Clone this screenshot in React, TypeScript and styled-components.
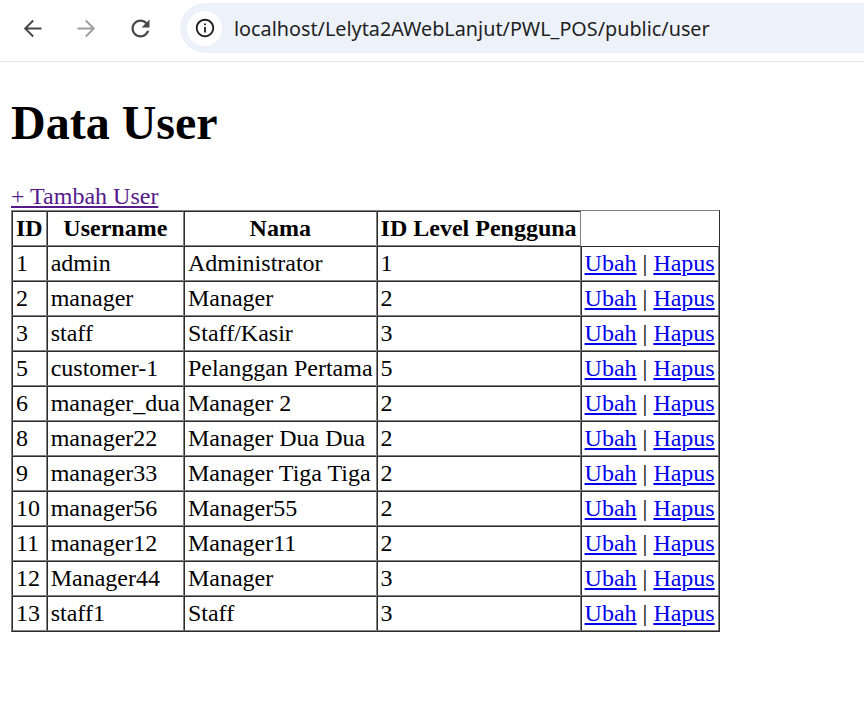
import React from "react";
import styled, { createGlobalStyle } from "styled-components";

const Global = createGlobalStyle`
  html, body { margin: 0; padding: 0; background: #ffffff; }
  body { font-family: "Liberation Serif", "Times New Roman", serif; color: #000; overflow: hidden; }
`;

const TopBar = styled.div`
  height: 62px;
  box-sizing: border-box;
  border-bottom: 1px solid #e2e2e2;
  display: flex;
  align-items: flex-start;
  padding: 3px 0 0 5px;
  background: #ffffff;
`;

const NavButton = styled.div<{ $dim?: boolean }>`
  width: 54px;
  height: 50px;
  display: flex;
  align-items: center;
  justify-content: center;
  color: ${(p) => (p.$dim ? "#9e9e9e" : "#474747")};
  flex-shrink: 0;
`;

const Omnibox = styled.div`
  flex: 1;
  margin-left: 13px;
  height: 50px;
  border-radius: 25px 0 0 25px;
  background: #edf2fa;
  display: flex;
  align-items: center;
  padding-left: 7px;
`;

const InfoBadge = styled.div`
  width: 35px;
  height: 35px;
  border-radius: 50%;
  background: #ffffff;
  display: flex;
  align-items: center;
  justify-content: center;
  color: #1f1f1f;
  flex-shrink: 0;
`;

const UrlText = styled.span`
  margin-left: 12px;
  font-family: "Noto Sans", "Liberation Sans", sans-serif;
  font-size: 19.8px;
  color: #1f1f1f;
  white-space: nowrap;
`;

const Page = styled.div`
  padding: 33px 12px 0 11px;
  font-size: 24px;
`;

const Title = styled.h1`
  font-size: 48px;
  font-weight: bold;
  margin: 0 0 32px;
  line-height: 55px;
`;

const AddLink = styled.a`
  display: block;
  color: #551a8b;
  text-decoration: underline;
  line-height: 28px;
  cursor: pointer;
`;

const Table = styled.table`
  border: 1px outset grey;
  border-spacing: 0;
  background: #ffffff;
  font-size: 24px;
  line-height: 27px;
`;

const HeadCell = styled.th`
  border: 1px inset grey;
  padding: 3px;
  font-weight: bold;
  text-align: center;
  white-space: nowrap;
`;

const Cell = styled.td`
  border: 1px inset grey;
  padding: 3px;
  white-space: nowrap;
`;

const ActionLink = styled.a`
  color: #0000ee;
  text-decoration: underline;
  cursor: pointer;
`;

type User = { id: number; username: string; nama: string; level: number };

const users: User[] = [
  { id: 1, username: "admin", nama: "Administrator", level: 1 },
  { id: 2, username: "manager", nama: "Manager", level: 2 },
  { id: 3, username: "staff", nama: "Staff/Kasir", level: 3 },
  { id: 5, username: "customer-1", nama: "Pelanggan Pertama", level: 5 },
  { id: 6, username: "manager_dua", nama: "Manager 2", level: 2 },
  { id: 8, username: "manager22", nama: "Manager Dua Dua", level: 2 },
  { id: 9, username: "manager33", nama: "Manager Tiga Tiga", level: 2 },
  { id: 10, username: "manager56", nama: "Manager55", level: 2 },
  { id: 11, username: "manager12", nama: "Manager11", level: 2 },
  { id: 12, username: "Manager44", nama: "Manager", level: 3 },
  { id: 13, username: "staff1", nama: "Staff", level: 3 },
];

const BackIcon = () => (
  <svg width="27" height="27" viewBox="0 0 24 24" fill="currentColor">
    <path d="M20 11.1H7.6l5.6-5.6-1.2-1.2L4.3 12l7.7 7.7 1.2-1.2-5.6-5.6H20z" />
  </svg>
);

const ForwardIcon = () => (
  <svg width="27" height="27" viewBox="0 0 24 24" fill="currentColor">
    <path d="M4 11.1h12.4l-5.6-5.6L12 4.3l7.7 7.7-7.7 7.7-1.2-1.2 5.6-5.6H4z" />
  </svg>
);

const ReloadIcon = () => (
  <svg width="27" height="27" viewBox="0 0 24 24" fill="currentColor">
    <path d="M17.65 6.35C16.2 4.9 14.21 4 12 4c-4.42 0-7.99 3.58-7.99 8s3.57 8 7.99 8c3.73 0 6.84-2.550 7.73-6h-2.08c-.82 2.33-3.04 4-5.65 4-3.31 0-6-2.69-6-6s2.69-6 6-6c1.66 0 3.14.69 4.22 1.78L13 11h7V4l-2.35 2.35z" />
  </svg>
);

const InfoIcon = () => (
  <svg width="22" height="22" viewBox="0 0 24 24" fill="currentColor">
    <path d="M11 7h2v2h-2zm0 4h2v6h-2zm1-9C6.48 2 2 6.48 2 12s4.48 10 10 10 10-4.48 10-10S17.52 2 12 2zm0 18c-4.41 0-8-3.59-8-8s3.59-8 8-8 8 3.59 8 8-3.59 8-8 8z" />
  </svg>
);

export default function App() {
  return (
    <>
      <Global />
      <TopBar>
        <NavButton>
          <BackIcon />
        </NavButton>
        <NavButton $dim>
          <ForwardIcon />
        </NavButton>
        <NavButton>
          <ReloadIcon />
        </NavButton>
        <Omnibox>
          <InfoBadge>
            <InfoIcon />
          </InfoBadge>
          <UrlText>localhost/Lelyta2AWebLanjut/PWL_POS/public/user</UrlText>
        </Omnibox>
      </TopBar>
      <Page>
        <Title>Data User</Title>
        <AddLink>+ Tambah User</AddLink>
        <Table>
          <thead>
            <tr>
              <HeadCell>ID</HeadCell>
              <HeadCell>Username</HeadCell>
              <HeadCell>Nama</HeadCell>
              <HeadCell>ID Level Pengguna</HeadCell>
            </tr>
          </thead>
          <tbody>
            {users.map((u) => (
              <tr key={u.id}>
                <Cell>{u.id}</Cell>
                <Cell>{u.username}</Cell>
                <Cell>{u.nama}</Cell>
                <Cell>{u.level}</Cell>
                <Cell>
                  <ActionLink>Ubah</ActionLink> | <ActionLink>Hapus</ActionLink>
                </Cell>
              </tr>
            ))}
          </tbody>
        </Table>
      </Page>
    </>
  );
}
